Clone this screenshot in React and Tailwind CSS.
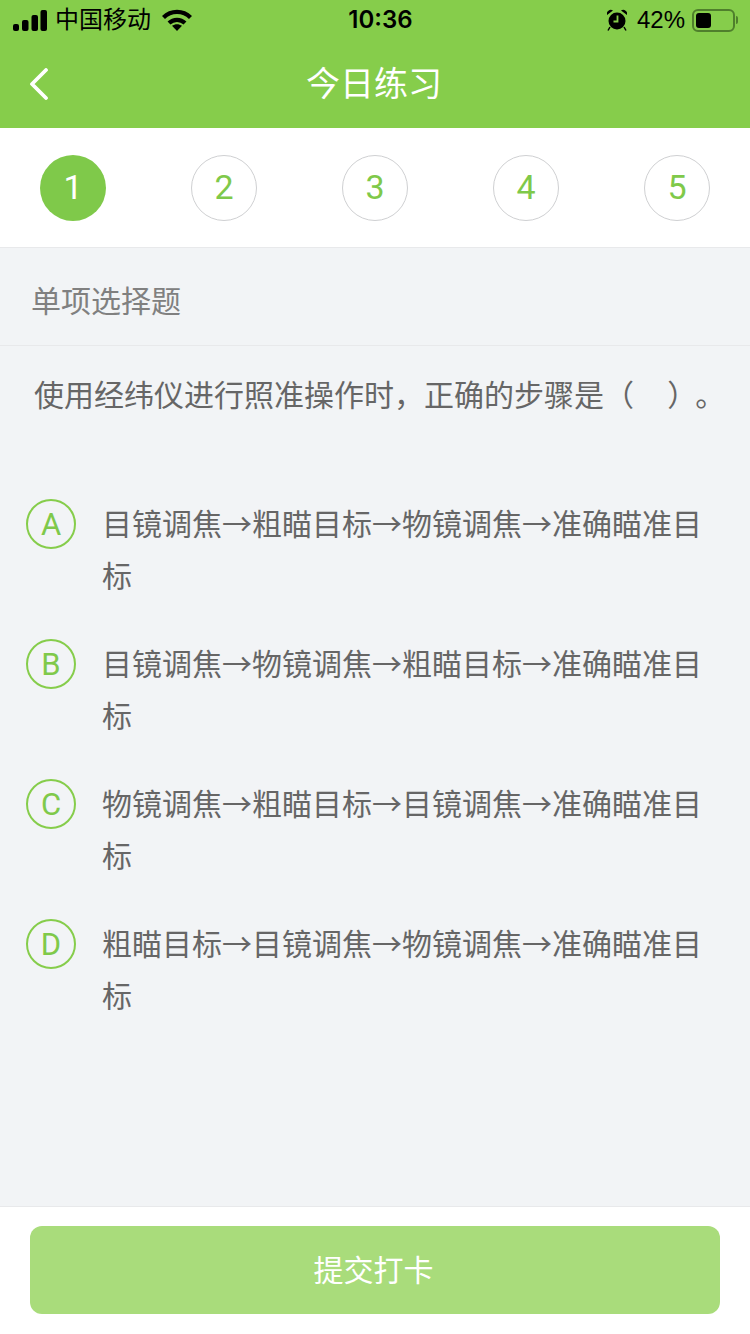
import { useState } from "react";

const GREEN = "#86cd4b";
const FONT = '"Liberation Sans", "Noto Sans CJK SC", sans-serif';

const OPTIONS = [
  { key: "A", text: "目镜调焦→粗瞄目标→物镜调焦→准确瞄准目标" },
  { key: "B", text: "目镜调焦→物镜调焦→粗瞄目标→准确瞄准目标" },
  { key: "C", text: "物镜调焦→粗瞄目标→目镜调焦→准确瞄准目标" },
  { key: "D", text: "粗瞄目标→目镜调焦→物镜调焦→准确瞄准目标" },
];

function StatusBar() {
  return (
    <div className="flex h-10 items-center justify-between pl-[13px] pr-[12px] text-black">
      <div className="flex w-[200px] items-center">
        <svg width="34" height="21" viewBox="0 0 34 21" fill="currentColor">
          <rect x="0" y="14" width="6" height="7" rx="2" />
          <rect x="9" y="10" width="6.500" height="11" rx="2" />
          <rect x="18.500" y="5" width="6.500" height="16" rx="2" />
          <rect x="27.500" y="0" width="6.500" height="21" rx="2" />
        </svg>
        <span className="ml-[8px] text-[24px] leading-none">中国移动</span>
        <svg className="ml-[11px]" width="30" height="22" viewBox="0 0 30 22" fill="none" stroke="currentColor" strokeWidth="4.200">
          <path d="M1.500 8.500C9 1 21 1 28.500 8.500" />
          <path d="M7 14C11.500 9.700 18.500 9.700 23 14" />
          <path d="M15 22L10 16.800C13 14.600 17 14.600 20 16.800Z" fill="currentColor" stroke="none" />
        </svg>
      </div>
      <span className="relative left-[5px] text-[24px] font-semibold leading-none" style={{ fontFamily: "Inter, sans-serif" }}>10:36</span>
      <div className="flex w-[200px] items-center justify-end">
        <svg width="20" height="22" viewBox="0 0 20 22" fill="currentColor">
          <circle cx="10" cy="12" r="8.500" />
          <path d="M0 6a4 4 0 0 1 6-4.500zM20 6a4 4 0 0 0-6-4.500z" />
          <path d="M3 18l-2 3.500M17 18l2 3.500" stroke="currentColor" strokeWidth="1.500" />
          <path d="M10.500 6.500v6h-4" fill="none" stroke={GREEN} strokeWidth="1.800" />
        </svg>
        <span className="ml-[10px] text-[24px] leading-none">42%</span>
        <div className="ml-[7px] flex h-[23px] w-[43px] items-center rounded-[6px] border-2 border-[#4f7f2c] p-[2px]">
          <div className="h-full w-[15px] rounded-[3px] bg-black" />
        </div>
        <div className="ml-[1px] h-[8px] w-[2px] rounded-r bg-[#4f7f2c]" />
      </div>
    </div>
  );
}

function Header() {
  return (
    <div className="relative flex h-[88px] items-center justify-center">
      <svg className="absolute left-[29px] top-[28px]" width="20" height="32" viewBox="0 0 20 32" fill="none" stroke="white" strokeWidth="3.800" strokeLinecap="round" strokeLinejoin="round">
        <path d="M17 2L3 16l14 14" />
      </svg>
      <span className="pr-[2px] text-[34px] leading-none text-white">今日练习</span>
    </div>
  );
}

function Steps({ active, onPick }) {
  return (
    <div className="flex h-[120px] items-center justify-between border-b border-[#e8e9eb] bg-white px-[40px]" style={{ fontFamily: "Roboto, sans-serif" }}>
      {[1, 2, 3, 4, 5].map((n) => (
        <button
          key={n}
          onClick={() => onPick(n)}
          className={
            n === active
              ? "flex h-[66px] w-[66px] items-center justify-center rounded-full bg-[#7fc94a] text-[34px] text-white"
              : "flex h-[66px] w-[66px] items-center justify-center rounded-full border border-[#cfd0d2] text-[34px] text-[#7fc94a]"
          }
        >
          {n}
        </button>
      ))}
    </div>
  );
}

function Option({ item }) {
  return (
    <div className="flex items-start">
      <div className="flex h-[50px] w-[50px] shrink-0 items-center justify-center rounded-full border-2 border-[#86cd4b] text-[31px] leading-none text-[#7fc94a]" style={{ fontFamily: "Roboto, sans-serif" }}>
        {item.key}
      </div>
      <p className="ml-[26px] mt-[-3px] w-[606px] text-[30px] leading-[52px] text-[#666666]" style={{ fontFamily: '"Noto Sans CJK SC", sans-serif' }}>{item.text}</p>
    </div>
  );
}

export default function App() {
  const [active, setActive] = useState(1);

  return (
    <div className="flex h-[1334px] w-[750px] flex-col overflow-hidden bg-[#f2f4f6]" style={{ fontFamily: FONT }}>
      <div className="bg-[#86cd4b]">
        <StatusBar />
        <Header />
      </div>
      <Steps active={active} onPick={setActive} />
      <div className="flex h-[98px] items-center border-b border-[#e8e9eb] pl-[31px] pt-[10px] text-[30px] text-[#808080]">
        单项选择题
      </div>
      <p className="mt-[24px] whitespace-pre pl-[34px] text-[30px] leading-[52px] text-[#666666]">
        使用经纬仪进行照准操作时，正确的步骤是（    ）<span className="ml-[13px]">。</span>
      </p>
      <div className="mt-[77px] flex flex-1 flex-col gap-[39px] pl-[26px]">
        {OPTIONS.map((item) => (
          <Option key={item.key} item={item} />
        ))}
      </div>
      <div className="flex h-[128px] border-t border-[#e8e9eb] bg-white px-[30px] pt-[19px]">
        <button className="h-[88px] w-full rounded-[12px] bg-[#a9dc7b] pr-[3px] text-[30px] text-white">提交打卡</button>
      </div>
    </div>
  );
}
